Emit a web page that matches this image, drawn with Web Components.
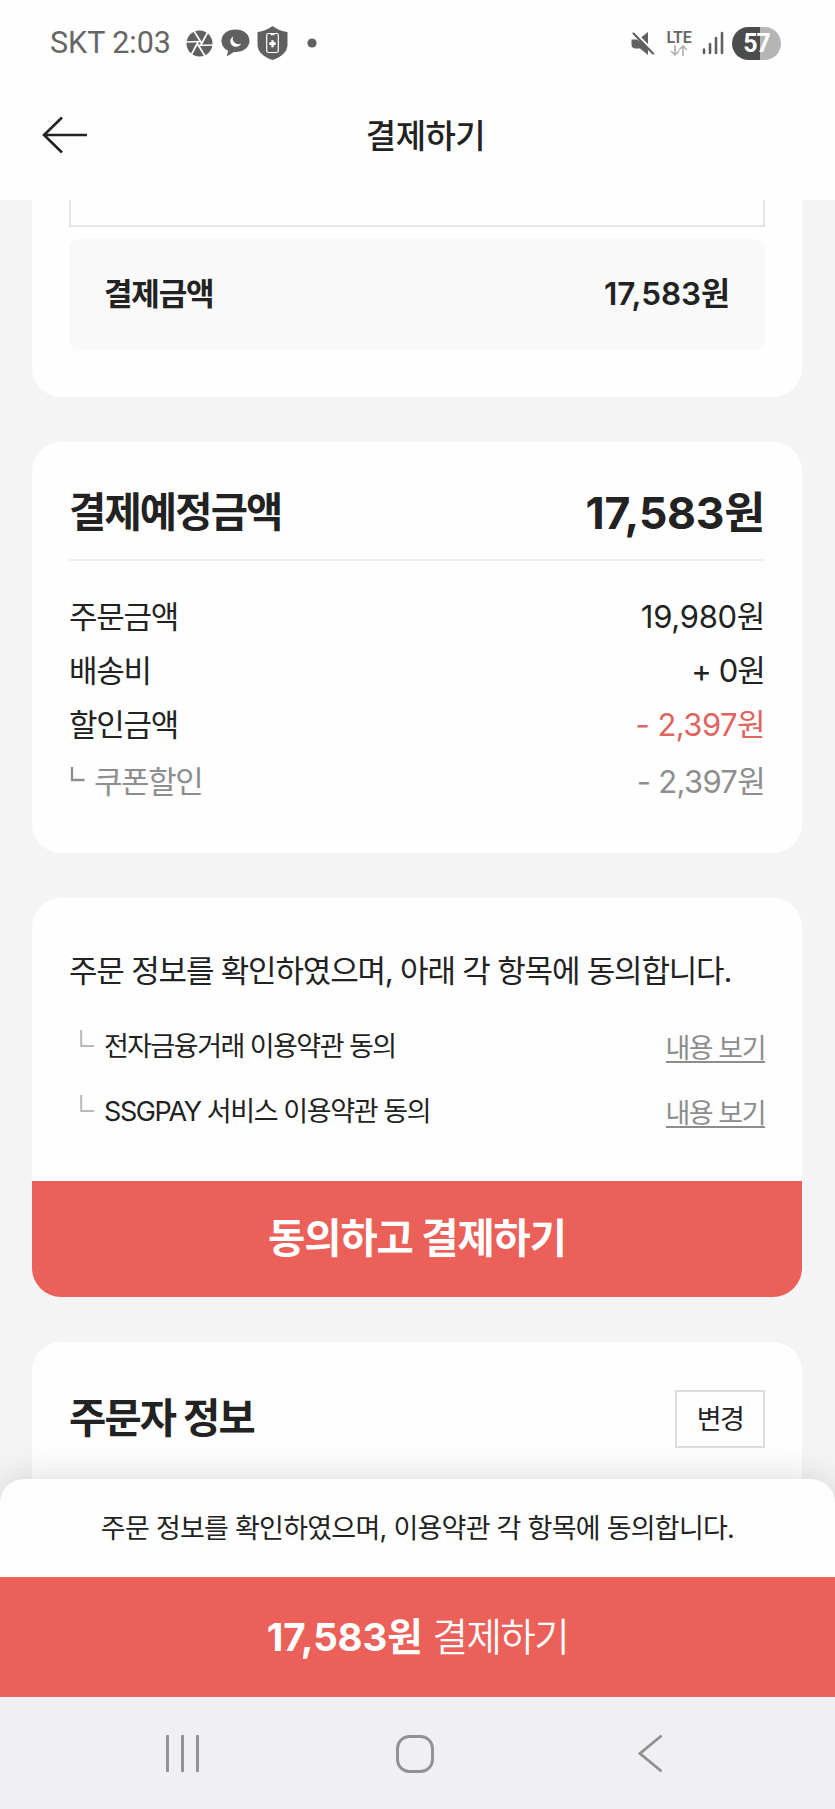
<!DOCTYPE html>
<html lang="ko">
<head>
<meta charset="utf-8">
<title>결제하기</title>
<style>
html,body{margin:0;padding:0}
body{width:835px;height:1809px;overflow:hidden;background:#f4f4f4;color:#222;font-family:Inter,"Noto Sans CJK KR",sans-serif}
</style>
</head>
<body>
<pay-app></pay-app>
<script>
const define = (name, css, html) => {
  const tpl = document.createElement('template');
  tpl.innerHTML = `<style>*{box-sizing:border-box}${css}</style>${html}`;
  customElements.define(name, class extends HTMLElement {
    constructor() {
      super();
      this.attachShadow({mode: 'open'}).append(tpl.content.cloneNode(true));
    }
  });
};

/* Text run with its own size, weight and tracking */
customElements.define('pay-text', class extends HTMLElement {
  constructor() {
    super();
    this.attachShadow({mode: 'open'}).innerHTML =
      '<style>:host{display:inline-block;white-space:pre;line-height:1}</style><slot></slot>';
  }
  connectedCallback() {
    const a = n => this.getAttribute(n);
    if (a('size')) this.style.fontSize = a('size') + 'px';
    if (a('weight')) this.style.fontWeight = a('weight');
    if (a('track')) this.style.letterSpacing = a('track') + 'px';
  }
});

define('status-bar', `
  :host{display:flex;align-items:center;justify-content:space-between;height:86px;padding:0 54px 0 50px;color:#666}
  .side{display:flex;align-items:center}
  svg{display:block;flex:none}
  .net{display:flex;flex-direction:column;align-items:center;width:28px;margin:0 9px 0 10px}
  .battery{display:flex;align-items:center;justify-content:center;width:49px;height:33px;border-radius:17px;background:linear-gradient(90deg,#4c4c4c 57%,#b5b5b5 57%);color:#fff;margin-left:8px}
`, `
  <div class="side">
    <pay-text size="30.5" track="-.05" style="font-family:Roboto,sans-serif;width:136px">SKT 2:03</pay-text>
    <svg width="27" height="27" viewBox="0 0 27 27"><circle cx="13.5" cy="13.5" r="13" fill="#606060"/>
      <g stroke="#fefefe" stroke-width="1.7" fill="none"><path d="M8 1L15.8 13.5"/><path d="M8 1L15.8 13.5" transform="rotate(60 13.5 13.5)"/><path d="M8 1L15.8 13.5" transform="rotate(120 13.5 13.5)"/><path d="M8 1L15.8 13.5" transform="rotate(180 13.5 13.5)"/><path d="M8 1L15.8 13.5" transform="rotate(240 13.5 13.5)"/><path d="M8 1L15.8 13.5" transform="rotate(300 13.5 13.5)"/></g></svg>
    <svg width="29" height="28" viewBox="0 0 29 28" style="margin-left:8px"><path fill="#606060" d="M14.5.5C6.500.5.5 5.300.5 11.800c0 4.600 2.600 8 6.700 10L5.700 27.500l7.300-4.400h1.500c8 0 14-4.800 14-11.300S22.500.5 14.500.5Z"/><path fill="#fefefe" d="M12.300 7.200c-3.400 2.200-3.900 6.600-1.200 9 3 2.600 7.400 1.800 9-1.400-2.800.9-5.200.4-6.900-1.500-1.600-1.800-1.900-3.900-.9-6.100Z"/></svg>
    <svg width="31" height="34" viewBox="0 0 31 34" style="margin-left:7px"><path fill="#606060" d="M15.500 0Q22 5 30.500 6V19Q30 29 15.500 34Q1 29 .5 19V6Q9 5 15.500 0Z"/><rect x="9.700" y="7.500" width="11.600" height="19" rx="1.800" fill="none" stroke="#fefefe" stroke-width="1.200"/><path d="M13.500 8.500h4" stroke="#fefefe" stroke-width="1.500"/><path fill="#fefefe" d="M14.300 14.200h2.400v2h2v2.800h-2v2.200h-2.400v-2.200h-2v-2.800h2z"/></svg>
    <svg width="10" height="10" viewBox="0 0 10 10" style="margin-left:19px"><circle cx="5" cy="5" r="4.600" fill="#606060"/></svg>
  </div>
  <div class="side">
    <svg width="24" height="25" viewBox="0 0 24 25"><path fill="#606060" d="M.5 8.500H6L17 16V24L9 17.500H4Q.5 17 .5 13.500ZM10 6.500 17 1V13Z"/><path d="M5 2.500 22 20" stroke="#fefefe" stroke-width="2"/><path d="M2.500 2.500 22 22.500" stroke="#606060" stroke-width="2.200" stroke-linecap="round"/></svg>
    <span class="net"><pay-text size="16" weight="600" track="-.2" style="height:15px;font-family:Roboto,sans-serif">LTE</pay-text>
      <svg width="18" height="11" viewBox="0 0 18 11"><path d="M5 0v9.500M1 6l4 4 4-4M13 11V1.500M9 5l4-4 4 4" stroke="#b4b4b4" stroke-width="1.700" fill="none"/></svg></span>
    <svg width="22" height="24" viewBox="0 0 22 24"><path d="M2 18.500v3.500M8 13v9M14 7v15M20 2v20" stroke="#606060" stroke-width="2.600" stroke-linecap="round"/></svg>
    <div class="battery"><pay-text size="25" weight="700" track="-1" style="font-family:Roboto,sans-serif">57</pay-text></div>
  </div>
`);

define('title-bar', `
  :host{display:grid;grid-template-columns:1fr auto 1fr;align-items:center;height:114px;padding:0 26px 15px 42px}
  svg{display:block}
`, `
  <svg width="46" height="38" viewBox="0 0 46 38" style="margin-top:-1px"><path d="M20 1.500 2 19 20 36.500M2 19H45" fill="none" stroke="#222" stroke-width="2.600"/></svg>
  <slot></slot><span></span>
`);

define('pay-card', `
  :host{display:block;flex:none;width:770px;margin:0 0 45px 32px;border-radius:29px;background:#fefefe;overflow:hidden}
`, `<slot></slot>`);

define('pay-row', `
  :host{display:flex;justify-content:space-between;align-items:center;height:54px;margin:0 37px}
`, `<slot></slot><slot name="value"></slot>`);

define('term-item', `
  :host{display:flex;align-items:center;height:65px;margin:0 37px 0 48px}
  svg{display:block;margin:-17px 9px 0 0}
  a{margin-left:auto;color:#8d8d8d;border-bottom:2px solid #8d8d8d;height:29px;margin-top:4px;line-height:1;padding-top:1px}
`, `
  <svg width="15" height="17" viewBox="0 0 15 17"><path d="M1.200 0V16H14" fill="none" stroke="#b8b8b8" stroke-width="2"/></svg>
  <slot></slot><a><pay-text size="27" track="-1.500">내용 보기</pay-text></a>
`);

define('pay-button', `
  :host{display:flex;align-items:center;justify-content:center;background:#eb6059;color:#fff}
`, `<slot></slot>`);

define('bottom-sheet', `
  :host{display:block;position:relative;background:#fefefe;border-radius:24px 24px 0 0;box-shadow:0 0 36px rgba(0,0,0,.15)}
  .note{display:flex;align-items:center;justify-content:center;height:98px}
  pay-button{height:120px}
`, `<div class="note"><slot name="note"></slot></div><pay-button><slot></slot></pay-button>`);

define('nav-bar', `
  :host{display:flex;position:relative;justify-content:space-between;height:112px;padding:38px 173px 0 165px;background:#f0f0f2}
  svg{display:block}
`, `
  <svg width="35" height="37" viewBox="0 0 35 37"><path d="M2.500 1v35M17.500 1v35M32.500 1v35" stroke="#919193" stroke-width="2.900" stroke-linecap="round"/></svg>
  <svg width="38" height="38" viewBox="0 0 38 38" style="margin-left:-8px"><rect x="1.500" y="1.500" width="35" height="35" rx="12" fill="none" stroke="#919193" stroke-width="2.900"/></svg>
  <svg width="24" height="37" viewBox="0 0 24 37"><path d="M22.500 1.500 2 18.500 22.500 35.500" fill="none" stroke="#919193" stroke-width="2.900" stroke-linecap="round"/></svg>
`);

define('pay-app', `
  :host{display:flex;flex-direction:column;height:1809px;width:835px}
  header{background:#fefefe;height:200px;flex:none}
  main{flex:1;min-height:0;display:flex;flex-direction:column;overflow:hidden;background:#f4f4f4;margin-bottom:-24px}
  .field{height:27px;margin:0 37px 12px;border:2px solid #e5e5e5;border-top:0}
  .total{display:flex;align-items:center;justify-content:space-between;height:111px;margin:0 37px 47px;padding:0 35px 2px;border-radius:10px;background:#f9f9f9}
  .heading{height:93px;padding-top:1px}
  .line{height:2px;background:#efefef;margin:0 37px 28px}
  .sub{height:60px;color:#8e8e8e}
  .red{color:#df6560}
  .elbow{display:block;margin:-14px 9px 0 0}
  .label{display:flex;align-items:center}
  .change{display:flex;align-items:center;justify-content:center;width:90px;height:58px;border:2px solid #ddd}
`, `
  <header>
    <status-bar></status-bar>
    <title-bar><pay-text size="33" weight="500" track="-.500" style="padding-top:2px">결제하기</pay-text></title-bar>
  </header>
  <main>
    <pay-card style="border-radius:0 0 29px 29px">
      <div class="field"></div>
      <div class="total"><pay-text size="31" weight="700" track="-1.200">결제금액</pay-text><pay-text size="31.500" weight="600" track="-.050">17,583원</pay-text></div>
    </pay-card>
    <pay-card style="padding-top:24px;height:411px">
      <pay-row class="heading"><pay-text size="40.500" weight="700" track="-1.850">결제예정금액</pay-text><pay-text slot="value" size="44.500" weight="700" track="-.250">17,583원</pay-text></pay-row>
      <div class="line"></div>
      <pay-row><pay-text size="31" track="-1.300">주문금액</pay-text><pay-text slot="value" size="31" track="-.300">19,980원</pay-text></pay-row>
      <pay-row><pay-text size="31" track="-1.300">배송비</pay-text><pay-text slot="value" size="31" track="-.900">+ 0원</pay-text></pay-row>
      <pay-row><pay-text size="31" track="-1.300">할인금액</pay-text><pay-text slot="value" class="red" size="31" track="-.550">- 2,397원</pay-text></pay-row>
      <pay-row class="sub"><span class="label"><svg class="elbow" width="16" height="15" viewBox="0 0 16 15"><path d="M3 0V13H15.500" fill="none" stroke="#8e8e8e" stroke-width="2.300"/></svg><pay-text size="31" track="-1.400">쿠폰할인</pay-text></span><pay-text slot="value" size="31" track="-.700">- 2,397원</pay-text></pay-row>
    </pay-card>
    <pay-card style="height:399px">
      <pay-row style="height:60px;margin-top:42px;margin-bottom:14px"><pay-text size="31" track="-1.180">주문 정보를 확인하였으며, 아래 각 항목에 동의합니다.</pay-text></pay-row>
      <term-item><pay-text size="27" track="-1.550">전자금융거래 이용약관 동의</pay-text></term-item>
      <term-item><pay-text size="27" track="-1.400">SSGPAY 서비스 이용약관 동의</pay-text></term-item>
      <pay-button style="height:116px;margin-top:37px"><pay-text size="40.500" weight="700" track="-1.100">동의하고 결제하기</pay-text></pay-button>
    </pay-card>
    <pay-card style="height:220px">
      <pay-row style="height:58px;margin-top:48px"><pay-text size="40.500" weight="700" track="-1.850">주문자 정보</pay-text><div slot="value" class="change"><pay-text size="27" track="-1.600">변경</pay-text></div></pay-row>
    </pay-card>
  </main>
  <bottom-sheet><pay-text slot="note" size="27" track="-.750">주문 정보를 확인하였으며, 이용약관 각 항목에 동의합니다.</pay-text><pay-text size="38.500" weight="700" track="-.150">17,583원</pay-text><pay-text size="38.500" track="-1.500" weight="350" style="margin-left:10px">결제하기</pay-text></bottom-sheet>
  <nav-bar></nav-bar>
`);
</script>
</body>
</html>
